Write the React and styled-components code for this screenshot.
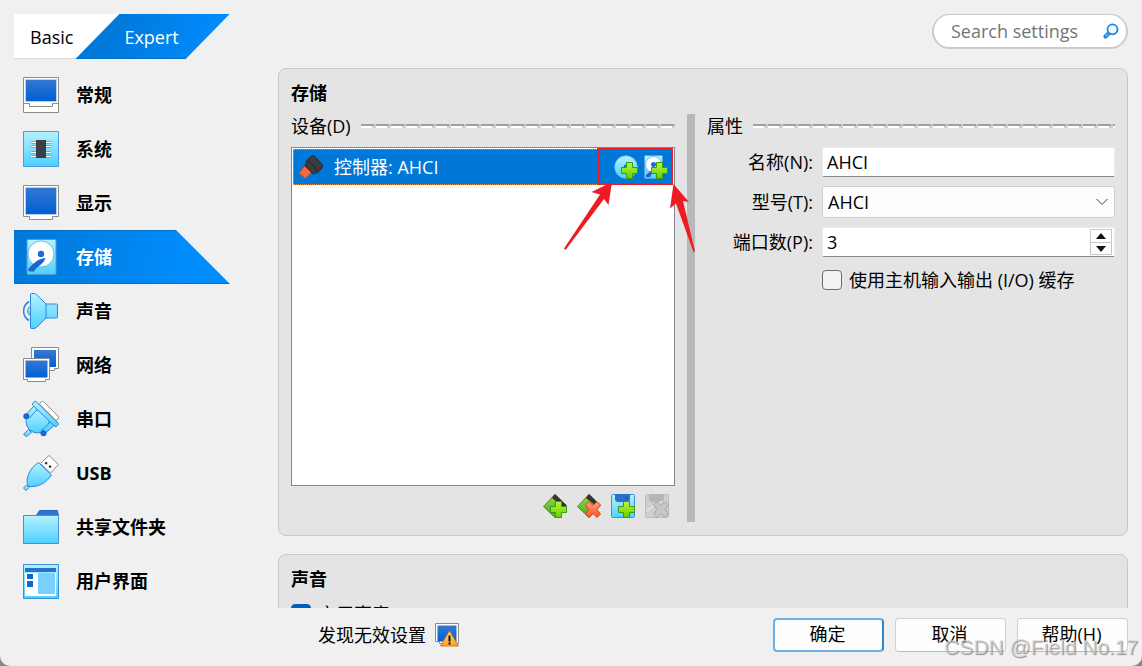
import React from 'react'
import styled, { createGlobalStyle, css } from 'styled-components'

const GlobalStyle = createGlobalStyle`
	* {
		box-sizing: border-box;
	}

	body {
		margin: 0;
		background: #8a8784;
		color: #000;
		font-family: 'Open Sans', 'Noto Sans CJK SC', sans-serif;
		font-size: 18px;
		line-height: 24px;
	}

	button, input, select {
		font: inherit;
		color: inherit;
	}

	h2, h3 {
		margin: 0;
		font-size: 18px;
	}
`

const Window = styled.div`
	position: relative;
	display: flex;
	flex-direction: column;
	height: 100vh;
	background: #f0f0f0;
	border-radius: 0 0 10px 10px;
	overflow: hidden;
`

const Header = styled.header`
	display: flex;
	justify-content: space-between;
	align-items: flex-start;
	padding: 14px 14px 9px;
`

const Tabs = styled.div`
	display: flex;
`

const Tab = styled.button`
	height: 45px;
	border: 0;
	padding: 2px 47px 0 16px;
	background: #fff;
	border-bottom: 1px solid #d8d8d8;
	clip-path: polygon(0 0, 100% 0, calc(100% - 44px) 100%, 0 100%);

	${props =>
		props.$active &&
		css`
			margin-left: -45px;
			padding: 2px 51px 0 49px;
			color: #fff;
			border-bottom: 1px solid #0072cc;
			background: linear-gradient(115deg, #0078d7 20%, #008cff 90%);
			clip-path: polygon(44px 0, 100% 0, calc(100% - 44px) 100%, 0 100%);
		`}
`

const Search = styled.label`
	display: flex;
	align-items: center;
	width: 196px;
	height: 35px;
	padding: 0 7px 0 17px;
	border: 2px solid #cbcbcb;
	border-top-width: 1px;
	border-radius: 18px;
	background: #fff;

	input {
		flex: 1;
		min-width: 0;
		padding: 0;
		border: 0;
		outline: 0;
		background: none;
	}

	input::placeholder {
		color: #757575;
		opacity: 1;
	}
`

const Body = styled.div`
	display: flex;
	flex: 1;
	min-height: 0;
	padding: 0 14px;
	gap: 48px;
`

const Nav = styled.nav`
	flex: 0 0 216px;
`

const NavItem = styled.a`
	display: flex;
	align-items: center;
	gap: 17px;
	height: 54px;
	padding-left: 9px;
	color: #000;
	font-weight: 700;
	text-decoration: none;

	${props =>
		props.$active &&
		css`
			color: #fff;
			border-top: 1px solid #0070c6;
			border-bottom: 1px solid #0070c6;
			background: linear-gradient(105deg, #0078d7, #008eff 85%);
			clip-path: polygon(0 0, calc(100% - 54px) 0, 100% 100%, 0 100%);
		`}
`

const Content = styled.main`
	flex: 1;
	min-width: 0;
	overflow: hidden;
`

const Card = styled.section`
	display: flex;
	flex-direction: column;
	gap: 8px;
	margin-bottom: 18px;
	padding: 12px 12px 13px;
	border: 1px solid #c8c8c8;
	border-radius: 8px;
	background: #e4e4e4;

	h2 {
		height: 25px;
	}
`

const Split = styled.div`
	display: grid;
	grid-template-columns: minmax(0, 16fr) 8px minmax(0, 17fr);
	gap: 12px;
	min-height: 408px;
`

const Splitter = styled.div`
	background: #b8b8b8;
`

const Group = styled.div`
	display: flex;
	flex-direction: column;
`

const GroupTitle = styled.h3`
	display: flex;
	align-items: center;
	gap: 10px;
	height: 24px;
	margin-bottom: 9px;
	font-weight: 400;

	&::after {
		content: '';
		flex: 1;
		height: 4px;
		background:
			repeating-linear-gradient(90deg, #a0a0a0 0 13px, #c8c8c8 13px 15px) top / 100% 2px no-repeat,
			repeating-linear-gradient(90deg, #fff 0 11px, #d0d0d0 11px 15px) bottom / 100% 2px no-repeat;
	}
`

const DeviceList = styled.div`
	flex: 1;
	padding: 1px;
	border: 1px solid #828790;
	background: #fff;
`

const Device = styled.div`
	position: relative;
	display: flex;
	align-items: center;
	gap: 11px;
	height: 36px;
	padding-left: 5px;
	border: 1px dotted #e8914a;
	background: #0078d7;
	color: #fff;
`

const Attach = styled.div`
	display: flex;
	align-items: center;
	gap: 6px;
	align-self: stretch;
	margin: -2px -1px -1px auto;
	padding: 0 3px 0 15px;
	border: 2px solid #ed1c24;
`

const IconButton = styled.button`
	display: flex;
	padding: 0;
	border: 0;
	background: none;
`

const Pointers = styled.svg`
	position: absolute;
	top: -5px;
	right: -29px;
	z-index: 1;
	pointer-events: none;
`

const Toolbar = styled.div`
	display: flex;
	justify-content: flex-end;
	gap: 10px;
	padding: 8px 6px 4px;
`

const Form = styled.div`
	display: grid;
	grid-template-columns: 106px minmax(0, 1fr);
	align-items: center;
	gap: 9px;

	> label {
		text-align: right;
	}
`

const TextInput = styled.input`
	width: 100%;
	min-width: 0;
	height: 30px;
	padding: 0 4px;
	border: 1px solid #ececec;
	border-bottom-color: #868686;
	border-radius: 2px;
	background: #fff;
	outline: 0;
`

const SelectBox = styled.div`
	position: relative;

	select {
		display: block;
		width: 100%;
		height: 32px;
		padding: 0 5px;
		appearance: none;
		border: 1px solid #d0d0d0;
		border-radius: 2px;
		background: #fdfdfd;
	}

	svg {
		position: absolute;
		top: 10px;
		right: 7px;
		pointer-events: none;
	}
`

const Spin = styled.div`
	display: flex;
	align-items: center;
	height: 30px;
	padding-right: 2px;
	border: 1px solid #ececec;
	border-bottom-color: #868686;
	border-radius: 2px;
	background: #fff;

	input {
		height: 28px;
		border: 0;
		background: none;
	}
`

const SpinButtons = styled.div`
	display: flex;
	flex-direction: column;
	border: 1px solid #c8c8c8;

	button {
		display: flex;
		align-items: center;
		justify-content: center;
		width: 20px;
		height: 12px;
		padding: 0;
		border: 0;
		background: #fdfdfd;
	}

	button + button {
		border-top: 1px solid #c8c8c8;
	}
`

const CheckLabel = styled.label`
	display: flex;
	align-items: center;
	gap: 7px;
	min-height: 28px;

	input {
		appearance: none;
		flex: none;
		width: 20px;
		height: 20px;
		margin: 0;
		border: 1px solid #6b6b6b;
		border-radius: 4px;
		background: #f3f3f3;
	}

	input:checked {
		border-color: #005fb8;
		background: #005fb8;
	}
`

const Property = styled.div`
	grid-column: 2;
`

const Footer = styled.footer`
	display: flex;
	align-items: center;
	gap: 11px;
	height: 58px;
	padding: 0 14px 5px 318px;
`

const Status = styled.div`
	display: flex;
	align-items: center;
	gap: 9px;
	margin-right: auto;
`

const Button = styled.button`
	width: 111px;
	height: 34px;
	padding: 0 2px 2px 0;
	border: 1px solid #d0d0d0;
	border-bottom-color: #bcbcbc;
	border-radius: 4px;
	background: #fdfdfd;

	${props =>
		props.$primary &&
		css`
			border: 2px solid #6cb0e6;
			border-right-color: #2f86cc;
		`}
`

const Watermark = styled.div`
	position: absolute;
	right: 4px;
	bottom: 7px;
	color: rgba(220, 220, 220, 0.65);
	font-family: 'Liberation Sans', sans-serif;
	font-size: 21px;
	text-shadow: 1px 1px 1px rgba(90, 90, 90, 0.65);
	pointer-events: none;
`

const Gradients = () => (
	<svg width="0" height="0" style={{ position: 'absolute' }} aria-hidden="true">
		<defs>
			<linearGradient id="cyan" x1="0" y1="0" x2="0" y2="1">
				<stop offset="0" stopColor="#b4f2fe" />
				<stop offset="1" stopColor="#4dd0ff" />
			</linearGradient>
			<linearGradient id="blue" x1="0" y1="0" x2="0" y2="1">
				<stop offset="0" stopColor="#3478d2" />
				<stop offset="1" stopColor="#005fd2" />
			</linearGradient>
			<linearGradient id="green" x1="0" y1="0" x2="0" y2="1">
				<stop offset="0" stopColor="#b8f53c" />
				<stop offset="1" stopColor="#62d000" />
			</linearGradient>
			<linearGradient id="red" x1="0" y1="0" x2="0" y2="1">
				<stop offset="0" stopColor="#ffa07c" />
				<stop offset="1" stopColor="#ff5428" />
			</linearGradient>
			<linearGradient id="amber" x1="0" y1="0" x2="0" y2="1">
				<stop offset="0" stopColor="#ffe08a" />
				<stop offset="1" stopColor="#ffa01e" />
			</linearGradient>
			<linearGradient id="leaf" x1="0" y1="0" x2="0" y2="1">
				<stop offset="0" stopColor="#8bdc50" />
				<stop offset="1" stopColor="#4ea81c" />
			</linearGradient>
		</defs>
	</svg>
)

const navIcons = {
	general: (
		<>
			<path d="M.5.5h35v35H.5z" fill="#fff" stroke="#8c8c8c" />
			<path d="M2.5 2.5h31v22h-31z" fill="url(#blue)" stroke="#b7cfef" />
			<path d="M.5 26.5h6v3h23v-3h6" fill="none" stroke="#8c8c8c" />
		</>
	),
	system: (
		<>
			<path d="M.5.5h35v35H.5z" fill="url(#cyan)" stroke="#4b9be4" />
			<g fill="#fff" stroke="#67a9df">
				<rect x="7.5" y="10.5" width="21" height="2" rx="1" />
				<rect x="7.5" y="14.5" width="21" height="2" rx="1" />
				<rect x="7.5" y="20.5" width="21" height="2" rx="1" />
				<rect x="7.5" y="24.5" width="21" height="2" rx="1" />
			</g>
			<path d="M13 9h10v18H13z" fill="#3b3e47" />
		</>
	),
	display: (
		<>
			<path d="M.5.5h35v31h-6v3h-23v-3h-6z" fill="#fff" stroke="#8c8c8c" />
			<path d="M2.5 2.5h31v27h-31z" fill="url(#blue)" stroke="#b7cfef" />
		</>
	),
	storage: (
		<>
			<rect x="4" y=".5" width="29" height="35" rx="1" fill="url(#cyan)" stroke="#4b9be4" />
			<circle cx="18" cy="15" r="13" fill="#fff" stroke="#4f9fe0" strokeWidth=".7" />
			<path d="M22.5 19C15 20 10 24 5.5 30c-.8 1.500 0 2.500 1.500 2.500h4C13 28 21 25 22.500 19z" fill="#1b62cd" />
			<circle cx="18" cy="15" r="3.200" fill="#1d6ad6" />
		</>
	),
	audio: (
		<>
			<path d="M6 8.500C-1.200 13-1.200 23 6 27.500" fill="none" stroke="#2e7fd8" strokeWidth="1.500" />
			<path d="M8 13c-4.500 1.500-4.500 8.500 0 10" fill="url(#cyan)" stroke="#4b8fdc" />
			<path d="M7.500 1.500q0-1 1-1h3l2 1L23 11h10.500q1 0 1 1v12q0 1-1 1H23l-9.500 9.500-2 1h-3q-1 0-1-1z" fill="url(#cyan)" stroke="#2f86dc" />
			<path d="M23 11v14" stroke="#2f86dc" />
		</>
	),
	network: (
		<>
			<path d="M8.500.5h27v21h-4v2h-15v-2h-8z" fill="#fff" stroke="#8c8c8c" />
			<path d="M11 3h22v17H11z" fill="url(#blue)" />
			<path d="M.5 11.500h26v21h-4v2h-18v-2h-4z" fill="#fff" stroke="#8c8c8c" />
			<path d="M2.500 13.500h22v17h-22z" fill="url(#blue)" />
		</>
	),
	serial: (
		<>
			<path d="M16.500 3q1-2.500 3-2.500 1 0 2 1L35 15q1 1 0 3l-2 1.500z" fill="#fff" stroke="#8c8c8c" />
			<path d="M.5 33.500l5-5 3 3-5 4z" fill="url(#cyan)" stroke="#2f86dc" />
			<circle cx="14.500" cy="20.500" r="11.500" fill="url(#cyan)" stroke="#2f86dc" />
			<path d="M2.500 14l9-9.500 3.500 3-8.500 9.500zM18.500 29.500l9-8.500 3.500 3.500-9 8z" fill="url(#cyan)" stroke="#2f86dc" />
			<path d="M9.500 4q-.5-1 1-2.500t2.500-1L35 22q1 1-.5 2.500t-2.500 1z" fill="url(#cyan)" stroke="#2f86dc" />
			<circle cx="3.300" cy="15.300" r="3" fill="#1b68d2" />
			<circle cx="20.500" cy="32.300" r="3" fill="#1b68d2" />
		</>
	),
	usb: (
		<>
			<path d="M17.500 8.500L26 .5l9.500 9-8 8.500z" fill="#fff" stroke="#8c8c8c" />
			<path d="M23 6.500l1.700 1.500-1.500 1.700-1.700-1.500zM27 10l1.700 1.500-1.500 1.700-1.700-1.500z" fill="#333" />
			<path d="M.5 33l3-3 2.500 2.500-3 3z" fill="url(#cyan)" stroke="#2f86dc" />
			<path d="M15.500 7.500L28.500 20C23 28 16 32.500 5 31.500 2 24 6 14 15.500 7.500z" fill="url(#cyan)" stroke="#2f86dc" />
		</>
	),
	folder: (
		<>
			<path d="M13 7l3.500-5.500h18L35.500 7z" fill="#2f74d0" stroke="#2468c8" />
			<path d="M.5 6.500h35v28H.5z" fill="url(#cyan)" stroke="#4b8fd0" />
		</>
	),
	ui: (
		<>
			<path d="M.5 1.500h35v34H.5z" fill="url(#cyan)" stroke="#3b8fd8" />
			<path d="M2 5h31v4H2z" fill="#2b6fd0" />
			<path d="M2 10h31v23H2z" fill="#fff" />
			<path d="M4 11h6v5H4zM4 18h6v6H4z" fill="#0f66d6" />
			<path d="M15 10h17v21H15z" fill="#78d0ff" />
		</>
	)
}

const Plus = () => (
	<path
		d="M12.500 7.500h6v5h5v6h-5v5h-6v-5h-5v-6h5z"
		fill="url(#green)"
		stroke="#3c9a10"
	/>
)

const Cross = ({ fill, stroke }) => (
	<path
		d="M8.500 11l3.500-3.500 4 4 4-4 3.500 3.500-3.500 4.500 3.500 4.500-3.500 3.500-4-4-4 4L8.500 20l3.500-4.500z"
		fill={fill}
		stroke={stroke}
	/>
)

const Diamond = () => (
	<>
		<path d="M12 .5L.5 12.500 12 23.500l11.500-12z" fill="url(#leaf)" stroke="#3d8a1c" />
		<path d="M.5 12.500L12 .5" stroke="#d8703c" />
		<path d="M12 0l12 12h-5L9 4z" fill="#333" />
	</>
)

const smallIcons = {
	controller: (
		<>
			<path d="M6 11l6.500 6L6.500 23.500 0 18z" fill="#f8683c" stroke="#c94f2c" />
			<path d="M13.500.5q1-.5 2 .5l8 9q1 1 0 2l-4 5-5.500 2-8-8 2-6z" fill="#3c3c40" stroke="#2a2a2c" />
			<path d="M8.500 5l10.500 11" stroke="#24242a" />
		</>
	),
	addOptical: (
		<>
			<circle cx="12" cy="12" r="11.200" fill="url(#cyan)" stroke="#6bc6f4" />
			<circle cx="12" cy="12" r="2.500" fill="#1671d2" />
			<Plus />
		</>
	),
	addDisk: (
		<>
			<rect x=".5" y=".5" width="18" height="23" rx="1" fill="url(#cyan)" stroke="#4aa3e8" />
			<circle cx="9.500" cy="9.500" r="8" fill="#fff" stroke="#5aa8e4" strokeWidth=".7" />
			<path d="M9 14.500q-4 2.500-7 5.500v2h4q1-3 3-4z" fill="#1b62cd" />
			<circle cx="9.500" cy="9.500" r="2.500" fill="#1d6ad6" />
			<Plus />
		</>
	),
	addController: (
		<>
			<Diamond />
			<Plus />
		</>
	),
	removeController: (
		<>
			<Diamond />
			<Cross fill="url(#red)" stroke="#d9421c" />
		</>
	),
	addAttachment: (
		<>
			<rect x=".5" y=".5" width="23" height="23" rx="1" fill="url(#cyan)" stroke="#3a92dc" />
			<path d="M4 0h15v6l-2 2H6L4 6z" fill="#2c6fcb" />
			<path d="M14 2h3v4h-3z" fill="#2460b8" />
			<Plus />
		</>
	),
	removeAttachment: (
		<>
			<rect x=".5" y=".5" width="23" height="23" rx="1" fill="#cfcfcf" stroke="#bcbcbc" />
			<path d="M4 0h15v6l-2 2H6L4 6z" fill="#b6b6b6" />
			<path d="M1 17L17 7" stroke="#f2f2f2" />
			<Cross fill="#c6c6c6" stroke="#a8a8a8" />
		</>
	),
	warning: (
		<>
			<path d="M.5.5h23v20H4.500v-2h-4z" fill="#fff" stroke="#8c8c8c" />
			<path d="M2.500 2.500h19v16h-19z" fill="url(#blue)" />
			<path d="M14.500 8L5.500 23h18z" fill="url(#amber)" stroke="#e07818" strokeLinejoin="round" />
			<path d="M13.500 12.500h2v6h-2zM13.500 19.500h2v2h-2z" fill="#111" />
		</>
	)
}

const NavIcon = ({ name }) => (
	<svg width="36" height="36" viewBox="0 0 36 36" aria-hidden="true">
		{navIcons[name]}
	</svg>
)

const SmallIcon = ({ name }) => (
	<svg width="24" height="24" viewBox="0 0 24 24" aria-hidden="true">
		{smallIcons[name]}
	</svg>
)

const sections = [
	{ id: 'general', title: '常规' },
	{ id: 'system', title: '系统' },
	{ id: 'display', title: '显示' },
	{ id: 'storage', title: '存储' },
	{ id: 'audio', title: '声音' },
	{ id: 'network', title: '网络' },
	{ id: 'serial', title: '串口' },
	{ id: 'usb', title: 'USB' },
	{ id: 'folder', title: '共享文件夹' },
	{ id: 'ui', title: '用户界面' }
]

const StorageCard = () => {
	const [name, setName] = React.useState('AHCI')
	const [ports, setPorts] = React.useState(3)

	return (
		<Card>
			<h2>存储</h2>
			<Split>
				<Group>
					<GroupTitle>设备(D)</GroupTitle>
					<DeviceList>
						<Device>
							<SmallIcon name="controller" />
							<span>控制器: AHCI</span>
							<Attach>
								<IconButton aria-label="添加虚拟光驱">
									<SmallIcon name="addOptical" />
								</IconButton>
								<IconButton aria-label="添加虚拟硬盘">
									<SmallIcon name="addDisk" />
								</IconButton>
							</Attach>
							<Pointers width="140" height="110" viewBox="0 0 140 110" fill="#ed1c24">
								<path d="M51 37L30.500 47l8.500 2.500L3 103.500l1.500 1.500L43 54l4.500 6z" />
								<path d="M112.500 39l-3.500 24.500 6-5L132.500 107l1.500-.5-12-50.500 6 1z" />
							</Pointers>
						</Device>
					</DeviceList>
					<Toolbar>
						<IconButton aria-label="添加控制器">
							<SmallIcon name="addController" />
						</IconButton>
						<IconButton aria-label="删除控制器">
							<SmallIcon name="removeController" />
						</IconButton>
						<IconButton aria-label="添加附件">
							<SmallIcon name="addAttachment" />
						</IconButton>
						<IconButton aria-label="删除附件" disabled>
							<SmallIcon name="removeAttachment" />
						</IconButton>
					</Toolbar>
				</Group>

				<Splitter />

				<Group>
					<GroupTitle>属性</GroupTitle>
					<Form>
						<label htmlFor="name">名称(N):</label>
						<TextInput id="name" value={name} onChange={e => setName(e.target.value)} />
						<label htmlFor="type">型号(T):</label>
						<SelectBox>
							<select id="type">
								<option>AHCI</option>
							</select>
							<svg width="12" height="12" viewBox="0 0 12 12" fill="none" stroke="#444">
								<path d="M.6 3L6 8.500 11.400 3" />
							</svg>
						</SelectBox>
						<label htmlFor="ports">端口数(P):</label>
						<Spin>
							<TextInput id="ports" value={ports} onChange={e => setPorts(Number(e.target.value) || 0)} />
							<SpinButtons>
								<button aria-label="增加" onClick={() => setPorts(ports + 1)}>
									<svg width="10" height="6" viewBox="0 0 10 6">
										<path d="M5 0l5 6H0z" fill="#111" />
									</svg>
								</button>
								<button aria-label="减少" onClick={() => setPorts(Math.max(1, ports - 1))}>
									<svg width="10" height="6" viewBox="0 0 10 6">
										<path d="M5 6l5-6H0z" fill="#111" />
									</svg>
								</button>
							</SpinButtons>
						</Spin>
						<Property>
							<CheckLabel>
								<input type="checkbox" />
								使用主机输入输出 (I/O) 缓存
							</CheckLabel>
						</Property>
					</Form>
				</Group>
			</Split>
		</Card>
	)
}

const App = () => (
	<>
		<GlobalStyle />
		<Gradients />
		<Window>
			<Header>
				<Tabs>
					<Tab>Basic</Tab>
					<Tab $active>Expert</Tab>
				</Tabs>
				<Search>
					<input type="text" placeholder="Search settings" aria-label="Search settings" />
					<svg width="16" height="16" viewBox="0 0 16 16" fill="none">
						<path d="M6 10l-3.500 3.500" stroke="#1a78d8" strokeWidth="4" strokeLinecap="round" />
						<path d="M5.500 10.500L3 13" stroke="#4ab4f4" strokeWidth="2" strokeLinecap="round" />
						<circle cx="9.500" cy="6.300" r="5" fill="#f2fcff" stroke="#2384e0" strokeWidth="1.800" />
					</svg>
				</Search>
			</Header>
			<Body>
				<Nav>
					{sections.map(({ id, title }) => (
						<NavItem key={id} href={`#${id}`} $active={id === 'storage'}>
							<NavIcon name={id} />
							{title}
						</NavItem>
					))}
				</Nav>
				<Content>
					<StorageCard />
					<Card>
						<h2>声音</h2>
						<CheckLabel>
							<input type="checkbox" defaultChecked />
							启用声音
						</CheckLabel>
					</Card>
				</Content>
			</Body>
			<Footer>
				<Status>
					发现无效设置
					<SmallIcon name="warning" />
				</Status>
				<Button $primary>确定</Button>
				<Button>取消</Button>
				<Button>帮助(H)</Button>
			</Footer>
			<Watermark>CSDN @Field No.17</Watermark>
		</Window>
	</>
)

export default App
